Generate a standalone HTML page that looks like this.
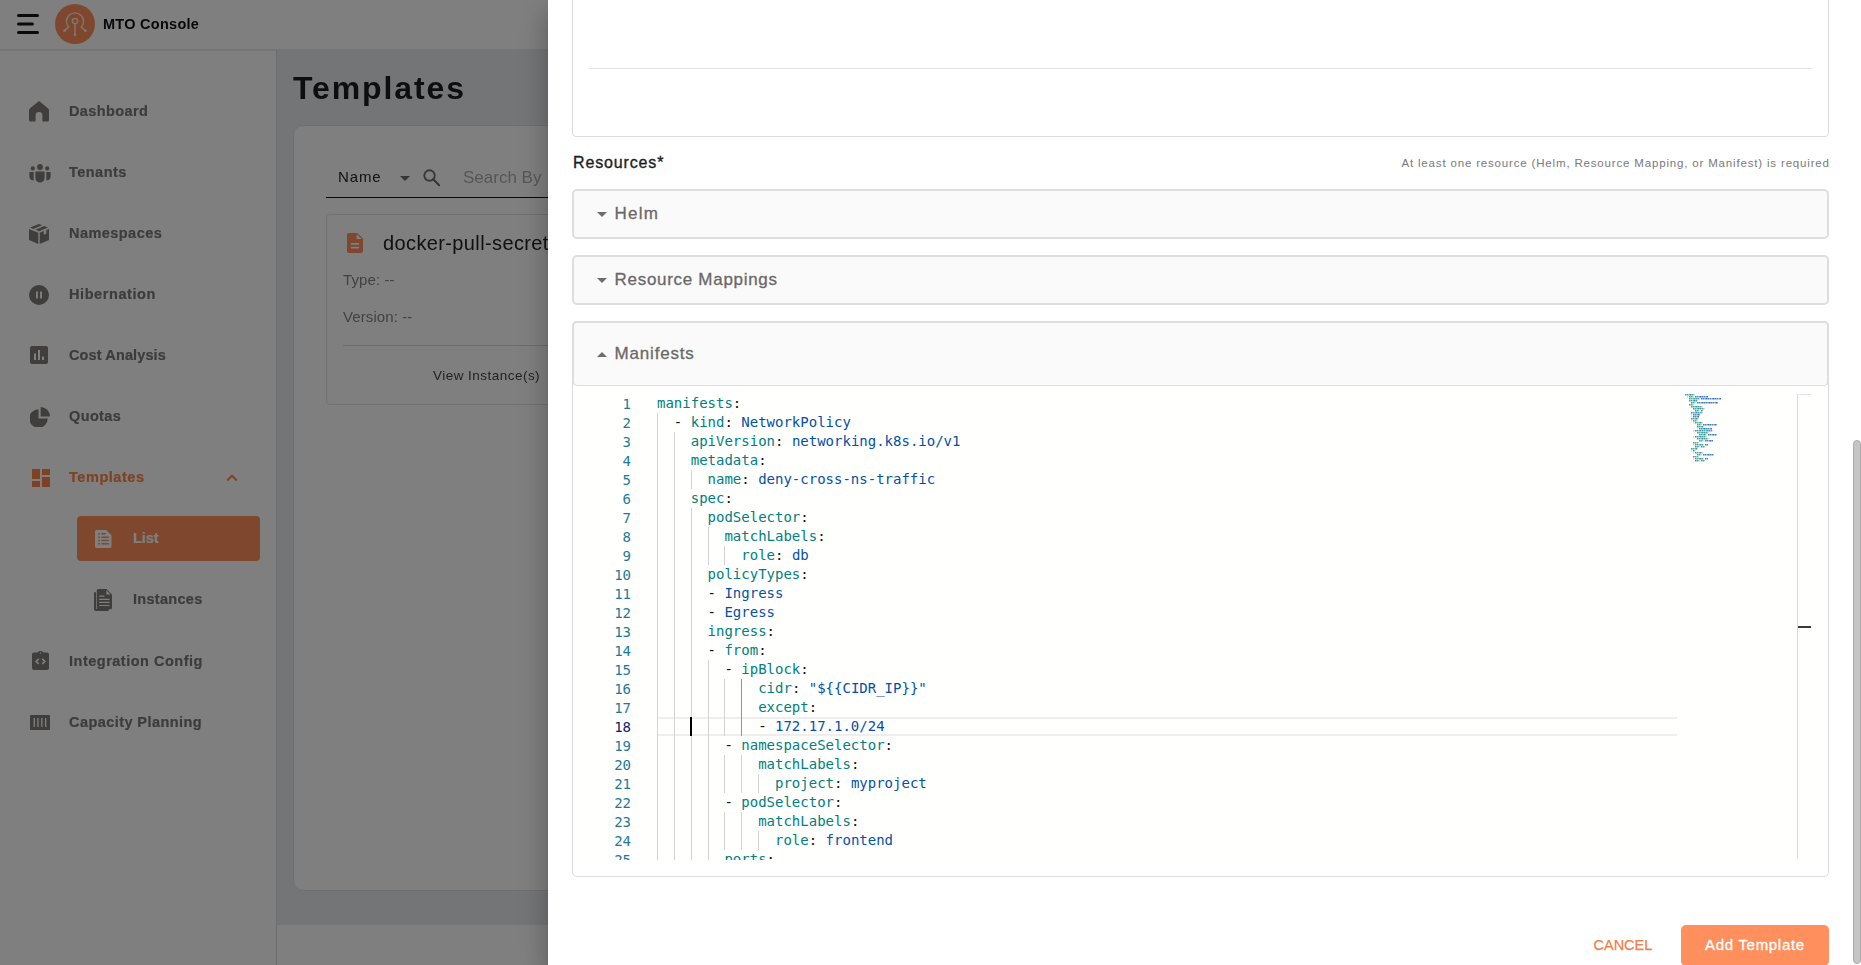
<!DOCTYPE html>
<html lang="en">
<head>
<meta charset="utf-8">
<title>MTO Console</title>
<style>
*{box-sizing:border-box;margin:0;padding:0}
html,body{width:1861px;height:965px;overflow:hidden;background:#e9ebef;font-family:"Liberation Sans",sans-serif;color:#1c1d21}
.abs{position:absolute}
#page{position:absolute;left:0;top:0;width:1861px;height:965px;will-change:transform}
/* ---------- header ---------- */
#hdr{position:absolute;left:0;top:0;width:1861px;height:49px;background:#fff}
#hdr .burger{position:absolute;left:17px;top:14px;width:22px;height:20px}
#hdr .burger i{position:absolute;left:0;height:3px;border-radius:2px;background:#1c1c1c}
#hdr .logo{position:absolute;left:55px;top:4px;width:40px;height:40px;border-radius:50%;background:#ff915e}
#hdr .brand{position:absolute;left:103px;top:14px;font-size:14.5px;font-weight:700;line-height:20px;color:#111;white-space:nowrap;letter-spacing:.27px}
/* ---------- sidebar ---------- */
#side{position:absolute;left:0;top:50px;width:277px;height:915px;background:linear-gradient(#e9ebef,#e9ebef) 0 0/100% 1px no-repeat,#fff;border-right:1px solid #dadada}
.nav{position:absolute;left:0;width:276px;height:44px}
.nav svg{position:absolute;left:28px;top:11px;width:22px;height:22px;fill:#8a8988}
.nav span{position:absolute;left:69px;top:12px;font-size:15px;line-height:20px;font-weight:700;color:#8a8988;white-space:nowrap}
.nav.act span{color:#ff8f5c}
.nav.act svg{fill:#ff8f5c}
.sub{position:absolute;left:77px;width:183px;height:45px;border-radius:4px}
.sub svg{position:absolute;left:16px;top:11px;width:22px;height:22px;fill:#8a8988}
.sub span{position:absolute;left:56px;top:12px;font-size:15px;line-height:20px;font-weight:700;color:#8a8988;white-space:nowrap}
.sub.on{background:#ff8f5c}
.sub.on span{color:#fff}
.sub.on svg{fill:#fff}

.ic{position:absolute;fill:#7f7d7b}
.nl{position:absolute;left:69px;font-size:14.5px;line-height:20px;font-weight:700;color:#7a7877;-webkit-text-stroke:.2px;white-space:nowrap}
/* ---------- main ---------- */
#main{position:absolute;left:0;top:49px;width:1861px;height:876px;background:#e9ebef}
#title{position:absolute;left:293px;top:66px;font-size:32px;line-height:44px;font-weight:700;color:#1c1d21;letter-spacing:1.900px}
#card{position:absolute;left:293px;top:125px;width:1540px;height:766px;background:#fff;border-radius:10px;border:1px solid #dedede}
#foot{position:absolute;left:277px;top:925px;width:1584px;height:40px;background:#fff}
/* ---------- overlay + drawer ---------- */
#ovl{position:absolute;left:0;top:0;width:1861px;height:965px;background:rgba(0,0,0,.5)}
#drawer{position:absolute;left:548px;top:0;width:1313px;height:965px;background:#fff;box-shadow:0 8px 10px -5px rgba(0,0,0,.2),0 16px 24px 2px rgba(0,0,0,.14),0 6px 30px 5px rgba(0,0,0,.12)}

/* ---------- drawer content ---------- */
#dw{position:absolute;left:548px;top:0;width:1313px;height:965px;background:#fff;overflow:hidden}
#dwi{position:absolute;left:-548px;top:0;width:1861px;height:965px}
.box{position:absolute;left:572px;width:1257px}
.acc{position:absolute;left:572px;width:1257px;background:#fafafa;border:2px solid #dedede;border-radius:5px}
.acc svg{position:absolute;left:23px;width:10px;height:5px}
.acc span{position:absolute;left:40.600px;font-size:17px;line-height:22px;color:#6a6868;-webkit-text-stroke:.3px #6a6868;white-space:nowrap}
#ed{position:absolute;left:573px;top:394px;width:1255px;height:466px;overflow:hidden;background:#fffffe}
.ln{position:absolute;left:0;width:1104px;height:19px}
.ln b{position:absolute;left:0;top:1px;width:58px;text-align:right;font:normal 14px/19px "DejaVu Sans Mono","Liberation Mono",monospace;color:#1c7a98}
.ln.cl b{color:#0b216f}
.ln pre{position:absolute;left:84px;top:0;margin:0;font:normal 14px/19px "DejaVu Sans Mono","Liberation Mono",monospace;color:#000;white-space:pre}
.ln i.g{position:absolute;top:0;margin-left:84px;width:1px;height:19px;background:#d3d3d3}
.ln i.g.a{background:#939393}
.ln.cl::before{content:"";box-sizing:border-box;position:absolute;left:84px;top:0;width:1020px;height:19px;border:2px solid #eee;border-left:0;border-right:0}
.ln i.cur{position:absolute;left:117px;top:0;width:2px;height:19px;background:#000}
.k{color:#008080}.o{color:#111}.v{color:#0451a5}.n{color:#098658}
#mini{position:absolute;left:1112px;top:0;width:112px;height:70px}
#mini i{position:absolute;height:2px;margin-top:0;background:currentColor;-webkit-mask-image:linear-gradient(90deg,rgba(0,0,0,.75) 0 1px,rgba(0,0,0,.45) 1px 2px,rgba(0,0,0,.7) 2px 3px,rgba(0,0,0,.4) 3px 4px,rgba(0,0,0,.6) 4px 5px,rgba(0,0,0,.8) 5px 6px,rgba(0,0,0,.5) 6px 7px),linear-gradient(rgba(0,0,0,.8) 0 .5px,#000 .5px 1.400px,rgba(0,0,0,.5) 1.400px 2px);-webkit-mask-size:7px 100%,100% 100%;-webkit-mask-composite:source-in;mask-composite:intersect}
#mini .mk{color:#008080}#mini .mo{color:#8a5a5a;opacity:.35}#mini .mv{color:#0451a5}#mini .mn{color:#098658}
</style>
</head>
<body>
<div id="page">
<div id="hdr">
  <svg class="burger" viewBox="0 0 24 22" style="left:16px;top:13px;width:24px;height:22px"><path d="M2.500 2.500h19M2.500 11h13.900M2.500 19.500h19" stroke="#151515" stroke-width="3" stroke-linecap="round" fill="none"/></svg>
  <svg class="logo" viewBox="0 0 40 40" style="background:none;border-radius:0"><circle cx="20" cy="20" r="20" fill="#ff905c"/><g fill="none" stroke="#fff" stroke-opacity=".8" stroke-width="1.450" stroke-linecap="round"><path d="M9.800 26.400l3.900-3.300a8.500 8.500 0 1 1 12.600 0l3.900 3.300"/><circle cx="20" cy="17.100" r="2.600"/><path d="M20 19.800v10.400"/></g><g fill="#fff" fill-opacity=".8"><circle cx="9.500" cy="26.700" r="1.300"/><circle cx="30.500" cy="26.700" r="1.300"/><circle cx="20" cy="30.800" r="1.300"/></g></svg>
  <div class="brand">MTO Console</div>
</div>
<div id="main"></div>
<div id="side">
  <!-- icons are positioned in page coordinates minus 50 (side top) -->
  <svg class="ic" style="left:29px;top:51px;width:20px;height:21px" viewBox="0 0 20 21"><path d="M8.7.9a2 2 0 0 1 2.6 0l7.6 6.3c.7.6 1.100 1.400 1.100 2.300V19a1.600 1.600 0 0 1-1.600 1.600h-4.100a.9.900 0 0 1-.9-.9V14.300a3.400 3.400 0 0 0-6.800 0v5.400a.9.900 0 0 1-.9.900H1.600A1.600 1.600 0 0 1 0 19V9.500c0-.9.400-1.700 1.100-2.300z"/></svg>
  <span class="nl" style="top:51px;letter-spacing:0.4px">Dashboard</span>

  <svg class="ic" style="left:29px;top:113.600px;width:22px;height:19px" viewBox="0 0 22 19"><circle cx="11" cy="3" r="2.900"/><circle cx="3.800" cy="4.400" r="2.100"/><circle cx="18.200" cy="4.400" r="2.100"/><path d="M6.400 7.600h9.200v6.300a4.600 4.600 0 0 1-9.200 0z"/><path d="M.4 8.100h4.300v8.200A4.300 4.300 0 0 1 .4 12.400z"/><path d="M21.600 8.100h-4.300v8.200a4.300 4.300 0 0 0 4.300-3.900z"/></svg>
  <span class="nl" style="top:112px;letter-spacing:0.47px">Tenants</span>

  <svg class="ic" style="left:29px;top:174px;width:20px;height:20px" viewBox="0 0 20 20"><path d="M10 0l3.100 1.200L4.300 4.900 1 3.500zM15.200 2l3.800 1.500-8.900 3.700-3.600-1.500zM0 4.900l9.300 3.800V20L0 16.100zM20 4.900V16.100L10.700 20V8.700l4.100-1.700v3.700l2.500-1V6z"/></svg>
  <span class="nl" style="top:173px;letter-spacing:0.45px">Namespaces</span>

  <svg class="ic" style="left:29px;top:235px;width:20px;height:20px" viewBox="0 0 20 20"><path fill-rule="evenodd" d="M10 0a10 10 0 1 0 0 20 10 10 0 0 0 0-20zM7 6.500h1.900v7H7zM11.100 6.500H13v7h-1.900z"/></svg>
  <span class="nl" style="top:234px;letter-spacing:0.58px">Hibernation</span>

  <svg class="ic" style="left:30px;top:296px;width:18px;height:18px" viewBox="0 0 18 18"><path fill-rule="evenodd" d="M2 0h14a2 2 0 0 1 2 2v14a2 2 0 0 1-2 2H2a2 2 0 0 1-2-2V2a2 2 0 0 1 2-2zM4 7.500h2V14H4zM8 4h2v10H8zM12 10.500h2V14h-2z"/></svg>
  <span class="nl" style="top:295px;letter-spacing:0.12px">Cost Analysis</span>

  <svg class="ic" style="left:30px;top:357px;width:20px;height:20px" viewBox="0 0 20 20"><path d="M8.500 2.200v9.300h9.300A9.300 9.300 0 1 1 8.500 2.200z"/><path d="M10.600 0A9.400 9.400 0 0 1 20 9.400h-9.400z"/></svg>
  <span class="nl" style="top:356px;letter-spacing:0.37px">Quotas</span>

  <svg class="ic" style="left:32px;top:419px;width:18px;height:18px;fill:#ff8246" viewBox="0 0 18 18"><path d="M0 0h8v10H0zM10 0h8v6h-8zM0 12h8v6H0zM10 8h8v10h-8z"/></svg>
  <span class="nl" style="top:417px;color:#ff8448;letter-spacing:0.55px">Templates</span>
  <svg style="position:absolute;left:226px;top:423px;width:12px;height:9px" viewBox="0 0 12 9"><path d="M1.200 7.500L6 2.700l4.800 4.800" fill="none" stroke="#ff8448" stroke-width="2"/></svg>

  <div class="sub on" style="left:77px;top:466px"></div>
  <svg class="ic" style="left:95px;top:480px;width:16.500px;height:18px;fill:#fff" viewBox="0 0 16 18" preserveAspectRatio="none"><path fill-rule="evenodd" d="M1.600 0h9.200L16 5.200v11.200A1.600 1.600 0 0 1 14.400 18H1.600A1.600 1.600 0 0 1 0 16.400V1.600A1.600 1.600 0 0 1 1.600 0zM3.100 3.1h1.700v1.500H3.100zM6.200 3.1h4.2v1.500H6.200zM3.100 6.4h1.700v1.500H3.100zM6.200 6.4h7.2v1.500H6.200zM3.100 9.8h1.700v1.500H3.100zM6.200 9.8h7.2v1.500H6.200zM3.100 13.1h1.700v1.500H3.100zM6.200 13.1h7.2v1.500H6.200z"/></svg>
  <span class="nl" style="left:133px;top:478px;color:#fff;letter-spacing:-0.05px">List</span>

  <svg class="ic" style="left:94px;top:539px;width:18px;height:22px" viewBox="0 0 18 22"><path d="M0 3.200h2v16.100a.8.800 0 0 0 .8.800H14.600V22H1.800A1.800 1.800 0 0 1 0 20.200z"/><path fill-rule="evenodd" d="M4.200 0h8.300L18 5.500v13.200a1.500 1.500 0 0 1-1.500 1.500H4.200a1.500 1.500 0 0 1-1.500-1.500V1.500A1.500 1.500 0 0 1 4.200 0zM12.400 1.300v4.300h4.300zM5.200 6.600h5.200v1.200H5.200zM5.200 9.700h10.300v1.200H5.200zM5.200 12.800h10.300V14H5.200zM5.200 15.900h10.300v1.200H5.200z"/></svg>
  <span class="nl" style="left:133px;top:539px;letter-spacing:0.3px">Instances</span>

  <svg class="ic" style="left:32px;top:601px;width:17px;height:19px" viewBox="0 0 17 19"><path fill-rule="evenodd" d="M8.500 0a3 3 0 0 1 2.900 1.500H15a2 2 0 0 1 2 2V17a2 2 0 0 1-2 2H2a2 2 0 0 1-2-2V3.500a2 2 0 0 1 2-2h3.600A3 3 0 0 1 8.500 0zm0 1.300a.7.700 0 1 0 0 1.400.7.700 0 0 0 0-1.400zM6.200 7.300L3 10.400l3.200 3.100 1.100-1.100-2.100-2 2.100-2zM10.800 7.300l-1.100 1.100 2.100 2-2.100 2 1.100 1.100 3.200-3.100z"/></svg>
  <span class="nl" style="top:601px;letter-spacing:0.5px">Integration Config</span>

  <svg class="ic" style="left:30px;top:665px;width:20px;height:15px" viewBox="0 0 20 15"><path fill-rule="evenodd" d="M1 0h18a1 1 0 0 1 1 1v13a1 1 0 0 1-1 1H1a1 1 0 0 1-1-1V1a1 1 0 0 1 1-1zM3.600 3v9h1.300V3zM7.300 3v9h1.300V3zM11.200 3v9h1.300V3zM15 3v9h1.300V3z"/></svg>
  <span class="nl" style="top:662px;letter-spacing:0.43px">Capacity Planning</span>
</div>
<div id="title">Templates</div>
<div id="card"></div>
<div class="abs" style="left:338px;top:167px;font-size:15px;line-height:20px;color:#26262a;letter-spacing:.9px">Name</div>
<svg class="abs" style="left:400px;top:176px;width:10px;height:5px" viewBox="0 0 10 5"><path d="M0 0h10L5 5z" fill="#6b6b6b"/></svg>
<svg class="abs" style="left:422.500px;top:169px;width:17.500px;height:17.500px" viewBox="0 0 18 18"><circle cx="6.700" cy="6.700" r="5.400" fill="none" stroke="#6e6e6e" stroke-width="1.900"/><path d="M10.600 10.600l6 6" stroke="#6e6e6e" stroke-width="2.200" stroke-linecap="round"/></svg>
<div class="abs" style="left:463px;top:166px;font-size:17px;line-height:24px;color:#adadad;letter-spacing:0;white-space:nowrap">Search By</div>
<div class="abs" style="left:326px;top:197px;width:1470px;height:1px;background:#111"></div>
<div class="abs" style="left:326px;top:214px;width:470px;height:191px;border:1px solid #e3e3e3;border-radius:4px;background:#fff"></div>
<svg class="abs" style="left:347px;top:233px;width:16px;height:20px" viewBox="0 0 15 20" preserveAspectRatio="none"><path fill-rule="evenodd" d="M2 0h7.500L15 5.500V18a2 2 0 0 1-2 2H2a2 2 0 0 1-2-2V2a2 2 0 0 1 2-2zM9 1.200V6h4.800zM3.700 10h7.600v1.700H3.700zM3.700 13.800h7.600v1.700H3.700z" fill="#ff8f5c"/></svg>
<div class="abs tt" style="left:383px;top:229px;font-size:20px;line-height:28px;color:#222;letter-spacing:.38px;white-space:nowrap">docker-pull-secret</div>
<div class="abs tt" style="left:343px;top:270px;font-size:15px;line-height:20px;color:#858585;letter-spacing:.1px;white-space:nowrap">Type: --</div>
<div class="abs tt" style="left:343px;top:306.500px;font-size:15px;line-height:20px;color:#858585;letter-spacing:.1px;white-space:nowrap">Version: --</div>
<div class="abs" style="left:343px;top:345px;width:436px;height:1px;background:#d9d9d9"></div>
<div class="abs tt" style="left:433px;top:367px;font-size:13.5px;line-height:18px;color:#444;letter-spacing:.47px;white-space:nowrap">View Instance(s)</div>
<div id="foot"></div>
</div>
<div id="ovl"></div>
<div id="drawer"></div>
<div id="dw"><div id="dwi">
<!-- upper section (scrolled) -->
<div class="box" style="top:-10px;height:147px;border:1px solid #dcdcdc;border-radius:4px"></div>
<div class="abs" style="left:589px;top:68px;width:1223px;height:1px;background:#e2e2e2"></div>
<div class="abs dt" style="left:573px;top:152.500px;font-size:16px;line-height:20px;font-weight:400;-webkit-text-stroke:.35px #1c1d26;color:#1c1d26;white-space:nowrap;letter-spacing:.85px">Resources*</div>
<div class="abs dt" style="right:31.200px;top:155px;font-size:11.5px;line-height:16px;color:#7a7a7a;white-space:nowrap;letter-spacing:.83px">At least one resource (Helm, Resource Mapping, or Manifest) is required</div>
<div class="acc" style="top:189px;height:50px"><svg style="top:21px" viewBox="0 0 10 5"><path d="M0 0h10L5 5z" fill="#706c6c"/></svg><span class="dt" style="top:12px;letter-spacing:1.200px">Helm</span></div>
<div class="acc" style="top:255px;height:50px"><svg style="top:21px" viewBox="0 0 10 5"><path d="M0 0h10L5 5z" fill="#706c6c"/></svg><span class="dt" style="top:12px;letter-spacing:.7px">Resource Mappings</span></div>
<!-- manifests accordion (open) -->
<div class="box" style="top:321px;height:556px;border:1px solid #dcdcdc;border-radius:5px;background:#fff"></div>
<div class="acc" style="top:321px;height:65px;border-bottom-width:1px"><svg style="top:29px" viewBox="0 0 10 5"><path d="M0 5h10L5 0z" fill="#706c6c"/></svg><span class="dt" style="top:20px;letter-spacing:.8px">Manifests</span></div>
<div id="ed">
<div class="ln" style="top:0px"><b>1</b><pre><span class="k">manifests</span><span class="o">:</span></pre></div>
<div class="ln" style="top:19px"><b>2</b><i class="g" style="left:0.00px"></i><pre>  <span class="o">- </span><span class="k">kind</span><span class="o">: </span><span class="v">NetworkPolicy</span></pre></div>
<div class="ln" style="top:38px"><b>3</b><i class="g" style="left:0.00px"></i><i class="g" style="left:16.86px"></i><pre>    <span class="k">apiVersion</span><span class="o">: </span><span class="v">networking.k8s.io/v1</span></pre></div>
<div class="ln" style="top:57px"><b>4</b><i class="g" style="left:0.00px"></i><i class="g" style="left:16.86px"></i><pre>    <span class="k">metadata</span><span class="o">:</span></pre></div>
<div class="ln" style="top:76px"><b>5</b><i class="g" style="left:0.00px"></i><i class="g" style="left:16.86px"></i><i class="g" style="left:33.71px"></i><pre>      <span class="k">name</span><span class="o">: </span><span class="v">deny-cross-ns-traffic</span></pre></div>
<div class="ln" style="top:95px"><b>6</b><i class="g" style="left:0.00px"></i><i class="g" style="left:16.86px"></i><pre>    <span class="k">spec</span><span class="o">:</span></pre></div>
<div class="ln" style="top:114px"><b>7</b><i class="g" style="left:0.00px"></i><i class="g" style="left:16.86px"></i><i class="g" style="left:33.71px"></i><pre>      <span class="k">podSelector</span><span class="o">:</span></pre></div>
<div class="ln" style="top:133px"><b>8</b><i class="g" style="left:0.00px"></i><i class="g" style="left:16.86px"></i><i class="g" style="left:33.71px"></i><i class="g" style="left:50.57px"></i><pre>        <span class="k">matchLabels</span><span class="o">:</span></pre></div>
<div class="ln" style="top:152px"><b>9</b><i class="g" style="left:0.00px"></i><i class="g" style="left:16.86px"></i><i class="g" style="left:33.71px"></i><i class="g" style="left:50.57px"></i><i class="g" style="left:67.43px"></i><pre>          <span class="k">role</span><span class="o">: </span><span class="v">db</span></pre></div>
<div class="ln" style="top:171px"><b>10</b><i class="g" style="left:0.00px"></i><i class="g" style="left:16.86px"></i><i class="g" style="left:33.71px"></i><pre>      <span class="k">policyTypes</span><span class="o">:</span></pre></div>
<div class="ln" style="top:190px"><b>11</b><i class="g" style="left:0.00px"></i><i class="g" style="left:16.86px"></i><i class="g" style="left:33.71px"></i><pre>      <span class="o">- </span><span class="v">Ingress</span></pre></div>
<div class="ln" style="top:209px"><b>12</b><i class="g" style="left:0.00px"></i><i class="g" style="left:16.86px"></i><i class="g" style="left:33.71px"></i><pre>      <span class="o">- </span><span class="v">Egress</span></pre></div>
<div class="ln" style="top:228px"><b>13</b><i class="g" style="left:0.00px"></i><i class="g" style="left:16.86px"></i><i class="g" style="left:33.71px"></i><pre>      <span class="k">ingress</span><span class="o">:</span></pre></div>
<div class="ln" style="top:247px"><b>14</b><i class="g" style="left:0.00px"></i><i class="g" style="left:16.86px"></i><i class="g" style="left:33.71px"></i><pre>      <span class="o">- </span><span class="k">from</span><span class="o">:</span></pre></div>
<div class="ln" style="top:266px"><b>15</b><i class="g" style="left:0.00px"></i><i class="g" style="left:16.86px"></i><i class="g" style="left:33.71px"></i><i class="g" style="left:50.57px"></i><pre>        <span class="o">- </span><span class="k">ipBlock</span><span class="o">:</span></pre></div>
<div class="ln" style="top:285px"><b>16</b><i class="g" style="left:0.00px"></i><i class="g" style="left:16.86px"></i><i class="g" style="left:33.71px"></i><i class="g" style="left:50.57px"></i><i class="g" style="left:67.43px"></i><i class="g a" style="left:84.29px"></i><pre>            <span class="k">cidr</span><span class="o">: </span><span class="v">&quot;${{CIDR_IP}}&quot;</span></pre></div>
<div class="ln" style="top:304px"><b>17</b><i class="g" style="left:0.00px"></i><i class="g" style="left:16.86px"></i><i class="g" style="left:33.71px"></i><i class="g" style="left:50.57px"></i><i class="g" style="left:67.43px"></i><i class="g a" style="left:84.29px"></i><pre>            <span class="k">except</span><span class="o">:</span></pre></div>
<div class="ln cl" style="top:323px"><b>18</b><i class="g" style="left:0.00px"></i><i class="g" style="left:16.86px"></i><i class="g" style="left:33.71px"></i><i class="g" style="left:50.57px"></i><i class="g" style="left:67.43px"></i><i class="g a" style="left:84.29px"></i><i class="cur"></i><pre>            <span class="o">- </span><span class="v">172.17.1.0/24</span></pre></div>
<div class="ln" style="top:342px"><b>19</b><i class="g" style="left:0.00px"></i><i class="g" style="left:16.86px"></i><i class="g" style="left:33.71px"></i><i class="g" style="left:50.57px"></i><pre>        <span class="o">- </span><span class="k">namespaceSelector</span><span class="o">:</span></pre></div>
<div class="ln" style="top:361px"><b>20</b><i class="g" style="left:0.00px"></i><i class="g" style="left:16.86px"></i><i class="g" style="left:33.71px"></i><i class="g" style="left:50.57px"></i><i class="g" style="left:67.43px"></i><i class="g" style="left:84.29px"></i><pre>            <span class="k">matchLabels</span><span class="o">:</span></pre></div>
<div class="ln" style="top:380px"><b>21</b><i class="g" style="left:0.00px"></i><i class="g" style="left:16.86px"></i><i class="g" style="left:33.71px"></i><i class="g" style="left:50.57px"></i><i class="g" style="left:67.43px"></i><i class="g" style="left:84.29px"></i><i class="g" style="left:101.14px"></i><pre>              <span class="k">project</span><span class="o">: </span><span class="v">myproject</span></pre></div>
<div class="ln" style="top:399px"><b>22</b><i class="g" style="left:0.00px"></i><i class="g" style="left:16.86px"></i><i class="g" style="left:33.71px"></i><i class="g" style="left:50.57px"></i><pre>        <span class="o">- </span><span class="k">podSelector</span><span class="o">:</span></pre></div>
<div class="ln" style="top:418px"><b>23</b><i class="g" style="left:0.00px"></i><i class="g" style="left:16.86px"></i><i class="g" style="left:33.71px"></i><i class="g" style="left:50.57px"></i><i class="g" style="left:67.43px"></i><i class="g" style="left:84.29px"></i><pre>            <span class="k">matchLabels</span><span class="o">:</span></pre></div>
<div class="ln" style="top:437px"><b>24</b><i class="g" style="left:0.00px"></i><i class="g" style="left:16.86px"></i><i class="g" style="left:33.71px"></i><i class="g" style="left:50.57px"></i><i class="g" style="left:67.43px"></i><i class="g" style="left:84.29px"></i><i class="g" style="left:101.14px"></i><pre>              <span class="k">role</span><span class="o">: </span><span class="v">frontend</span></pre></div>
<div class="ln" style="top:456px"><b>25</b><i class="g" style="left:0.00px"></i><i class="g" style="left:16.86px"></i><i class="g" style="left:33.71px"></i><i class="g" style="left:50.57px"></i><pre>        <span class="k">ports</span><span class="o">:</span></pre></div>
<div id="mini"><i class="mk" style="left:0px;top:0px;width:9px"></i><i class="mo" style="left:9px;top:0px;width:1px"></i><i class="mo" style="left:2px;top:2px;width:1px"></i><i class="mk" style="left:4px;top:2px;width:4px"></i><i class="mo" style="left:8px;top:2px;width:1px"></i><i class="mv" style="left:10px;top:2px;width:13px"></i><i class="mk" style="left:4px;top:4px;width:10px"></i><i class="mo" style="left:14px;top:4px;width:1px"></i><i class="mv" style="left:16px;top:4px;width:20px"></i><i class="mk" style="left:4px;top:6px;width:8px"></i><i class="mo" style="left:12px;top:6px;width:1px"></i><i class="mk" style="left:6px;top:8px;width:4px"></i><i class="mo" style="left:10px;top:8px;width:1px"></i><i class="mv" style="left:12px;top:8px;width:21px"></i><i class="mk" style="left:4px;top:10px;width:4px"></i><i class="mo" style="left:8px;top:10px;width:1px"></i><i class="mk" style="left:6px;top:12px;width:11px"></i><i class="mo" style="left:17px;top:12px;width:1px"></i><i class="mk" style="left:8px;top:14px;width:11px"></i><i class="mo" style="left:19px;top:14px;width:1px"></i><i class="mk" style="left:10px;top:16px;width:4px"></i><i class="mo" style="left:14px;top:16px;width:1px"></i><i class="mv" style="left:16px;top:16px;width:2px"></i><i class="mk" style="left:6px;top:18px;width:11px"></i><i class="mo" style="left:17px;top:18px;width:1px"></i><i class="mo" style="left:6px;top:20px;width:1px"></i><i class="mv" style="left:8px;top:20px;width:7px"></i><i class="mo" style="left:6px;top:22px;width:1px"></i><i class="mv" style="left:8px;top:22px;width:6px"></i><i class="mk" style="left:6px;top:24px;width:7px"></i><i class="mo" style="left:13px;top:24px;width:1px"></i><i class="mo" style="left:6px;top:26px;width:1px"></i><i class="mk" style="left:8px;top:26px;width:4px"></i><i class="mo" style="left:12px;top:26px;width:1px"></i><i class="mo" style="left:8px;top:28px;width:1px"></i><i class="mk" style="left:10px;top:28px;width:7px"></i><i class="mo" style="left:17px;top:28px;width:1px"></i><i class="mk" style="left:12px;top:30px;width:4px"></i><i class="mo" style="left:16px;top:30px;width:1px"></i><i class="mv" style="left:18px;top:30px;width:14px"></i><i class="mk" style="left:12px;top:32px;width:6px"></i><i class="mo" style="left:18px;top:32px;width:1px"></i><i class="mo" style="left:12px;top:34px;width:1px"></i><i class="mv" style="left:14px;top:34px;width:13px"></i><i class="mo" style="left:8px;top:36px;width:1px"></i><i class="mk" style="left:10px;top:36px;width:17px"></i><i class="mo" style="left:27px;top:36px;width:1px"></i><i class="mk" style="left:12px;top:38px;width:11px"></i><i class="mo" style="left:23px;top:38px;width:1px"></i><i class="mk" style="left:14px;top:40px;width:7px"></i><i class="mo" style="left:21px;top:40px;width:1px"></i><i class="mv" style="left:23px;top:40px;width:9px"></i><i class="mo" style="left:8px;top:42px;width:1px"></i><i class="mk" style="left:10px;top:42px;width:11px"></i><i class="mo" style="left:21px;top:42px;width:1px"></i><i class="mk" style="left:12px;top:44px;width:11px"></i><i class="mo" style="left:23px;top:44px;width:1px"></i><i class="mk" style="left:14px;top:46px;width:4px"></i><i class="mo" style="left:18px;top:46px;width:1px"></i><i class="mv" style="left:20px;top:46px;width:8px"></i><i class="mk" style="left:8px;top:48px;width:5px"></i><i class="mo" style="left:13px;top:48px;width:1px"></i><i class="mo" style="left:8px;top:50px;width:1px"></i><i class="mk" style="left:10px;top:50px;width:8px"></i><i class="mo" style="left:18px;top:50px;width:1px"></i><i class="mv" style="left:20px;top:50px;width:3px"></i><i class="mk" style="left:10px;top:52px;width:4px"></i><i class="mo" style="left:14px;top:52px;width:1px"></i><i class="mn" style="left:16px;top:52px;width:4px"></i><i class="mk" style="left:6px;top:54px;width:6px"></i><i class="mo" style="left:12px;top:54px;width:1px"></i><i class="mo" style="left:6px;top:56px;width:1px"></i><i class="mk" style="left:8px;top:56px;width:2px"></i><i class="mo" style="left:10px;top:56px;width:1px"></i><i class="mo" style="left:8px;top:58px;width:1px"></i><i class="mk" style="left:10px;top:58px;width:7px"></i><i class="mo" style="left:17px;top:58px;width:1px"></i><i class="mk" style="left:12px;top:60px;width:4px"></i><i class="mo" style="left:16px;top:60px;width:1px"></i><i class="mv" style="left:18px;top:60px;width:11px"></i><i class="mk" style="left:8px;top:62px;width:5px"></i><i class="mo" style="left:13px;top:62px;width:1px"></i><i class="mo" style="left:8px;top:64px;width:1px"></i><i class="mk" style="left:10px;top:64px;width:8px"></i><i class="mo" style="left:18px;top:64px;width:1px"></i><i class="mv" style="left:20px;top:64px;width:3px"></i><i class="mk" style="left:10px;top:66px;width:4px"></i><i class="mo" style="left:14px;top:66px;width:1px"></i><i class="mn" style="left:16px;top:66px;width:4px"></i></div>
<div style="position:absolute;left:1224px;top:0;width:1px;height:465px;background:#d9d9d9"></div>
<div style="position:absolute;left:1224px;top:0;width:14px;height:1px;background:#e4e4e4"></div>
<div style="position:absolute;left:1225px;top:232px;width:13px;height:2px;background:#3a3a3a"></div>
</div>
<!-- footer buttons -->
<div class="abs dt" style="left:1593.500px;top:935px;font-size:14.5px;line-height:20px;color:#f47c48;-webkit-text-stroke:.25px #f47c48;white-space:nowrap;letter-spacing:0">CANCEL</div>
<div class="abs" style="left:1681px;top:925px;width:148px;height:40.500px;border-radius:5px;background:#ff8f5c"></div>
<div class="abs dt" style="left:1705px;top:935px;font-size:15px;line-height:20px;color:#fff;-webkit-text-stroke:.3px #fff;white-space:nowrap;letter-spacing:.7px">Add Template</div>
<!-- drawer scrollbar -->
<div class="abs" style="left:1853px;top:440px;width:8px;height:524px;border-radius:4px;background:#c5c5c5;border:1px solid #ababab"></div>
</div></div>
</body>
</html>
